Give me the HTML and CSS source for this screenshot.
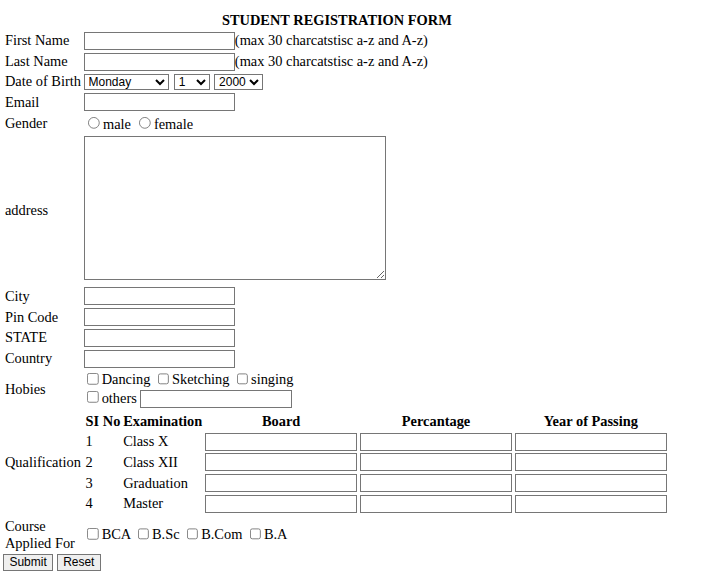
FILE: index.html
```html
<!DOCTYPE html>
<html>
<head>
<meta charset="utf-8">
<title>Student Registration Form</title>
<link rel="stylesheet" href="styles.css">
</head>
<body>
<form class="reg">
<table class="form">
<tr><td colspan="2" class="title">STUDENT REGISTRATION FORM</td></tr>
<tr><td>First Name</td><td><input type="text" class="field">(max 30 charcatstisc a-z and A-z)</td></tr>
<tr><td>Last Name</td><td><input type="text" class="field">(max 30 charcatstisc a-z and A-z)</td></tr>
<tr><td>Date of Birth</td><td><select class="sel"><option>Monday</option><option>Tuesday</option><option>Wednesday</option><option>Thursday</option><option>Friday</option><option>Saturday</option><option>Sunday</option></select> <select class="sel next"><option>1</option><option>2</option><option>3</option><option>10</option><option>20</option><option>30</option></select> <select class="sel next"><option>2000</option><option>2001</option><option>2002</option></select></td></tr>
<tr><td>Email</td><td><input type="text" class="field"></td></tr>
<tr><td>Gender</td><td><input type="radio" name="gender" class="radio">male <input type="radio" name="gender" class="radio">female</td></tr>
<tr><td>address</td><td><textarea class="addr"></textarea></td></tr>
<tr><td>City</td><td><input type="text" class="field"></td></tr>
<tr><td>Pin Code</td><td><input type="text" class="field"></td></tr>
<tr><td>STATE</td><td><input type="text" class="field"></td></tr>
<tr><td>Country</td><td><input type="text" class="field"></td></tr>
<tr><td>Hobies</td><td><input type="checkbox" class="check">Dancing <input type="checkbox" class="check">Sketching <input type="checkbox" class="check">singing<br><input type="checkbox" class="check">others <input type="text" class="field"></td></tr>
<tr><td>Qualification</td><td>
<table class="qual">
<tr><th>SI No</th><th>Examination</th><th>Board</th><th>Percantage</th><th>Year of Passing</th></tr>
<tr><td>1</td><td>Class X</td><td><input type="text" class="field wide"></td><td><input type="text" class="field wide"></td><td><input type="text" class="field wide"></td></tr>
<tr><td>2</td><td>Class XII</td><td><input type="text" class="field wide"></td><td><input type="text" class="field wide"></td><td><input type="text" class="field wide"></td></tr>
<tr><td>3</td><td>Graduation</td><td><input type="text" class="field wide"></td><td><input type="text" class="field wide"></td><td><input type="text" class="field wide"></td></tr>
<tr><td>4</td><td>Master</td><td><input type="text" class="field wide"></td><td><input type="text" class="field wide"></td><td><input type="text" class="field wide"></td></tr>
</table>
</td></tr>
<tr><td>Course<br>Applied For</td><td><input type="checkbox" class="check">BCA <input type="checkbox" class="check">B.Sc <input type="checkbox" class="check">B.Com <input type="checkbox" class="check">B.A</td></tr>
</table>
<input type="submit" value="Submit" class="btn"> <input type="reset" value="Reset" class="btn">
</form>
</body>
</html>
```

FILE: styles.css
```css
html {
  background: #ffffff;
}
body {
  zoom: 0.9;
  margin: 11.3px 0 0 3.4px;
  font-family: "Liberation Serif", "Times New Roman", serif;
  font-size: 16px;
  color: #000000;
}
.reg {
  margin: 0;
}
.form {
  border-spacing: 2px;
}
.form td,
.qual td,
.qual th {
  padding: 1px;
}
.title {
  text-align: center;
  font-weight: bold;
}
.qual {
  border-spacing: 2px;
}
.qual th {
  font-weight: bold;
}
.field,
.sel,
.addr,
.btn {
  font-family: "Liberation Sans", Arial, sans-serif;
  font-size: 13.333px;
}
.field {
  box-sizing: border-box;
  width: 168px;
  height: 20px;
  padding: 1px 2px;
  border: 1px solid #767676;
  border-radius: 0;
  margin: 0;
  vertical-align: baseline;
}
.wide {
  width: 169px;
}
.sel {
  margin: 0;
  height: 17px;
  border: 1px solid #767676;
  border-radius: 0;
  background: #ffffff;
  padding: 0 1px 0 1px;
}
.next {
  margin-left: 1px;
}
.addr {
  box-sizing: border-box;
  width: 336px;
  height: 161px;
  border: 1px solid #767676;
  border-radius: 0;
  margin: 0;
}
.radio {
  width: 13.5px;
  height: 13.5px;
  margin: 3px 3px 0 5px;
}
.check {
  margin: 3px 3px 3px 4px;
}
.btn {
  margin: 0;
  padding: 1px 6px;
  border: 1px solid #767676;
  border-radius: 0;
  background: #efefef;
  color: #000000;
}
```
